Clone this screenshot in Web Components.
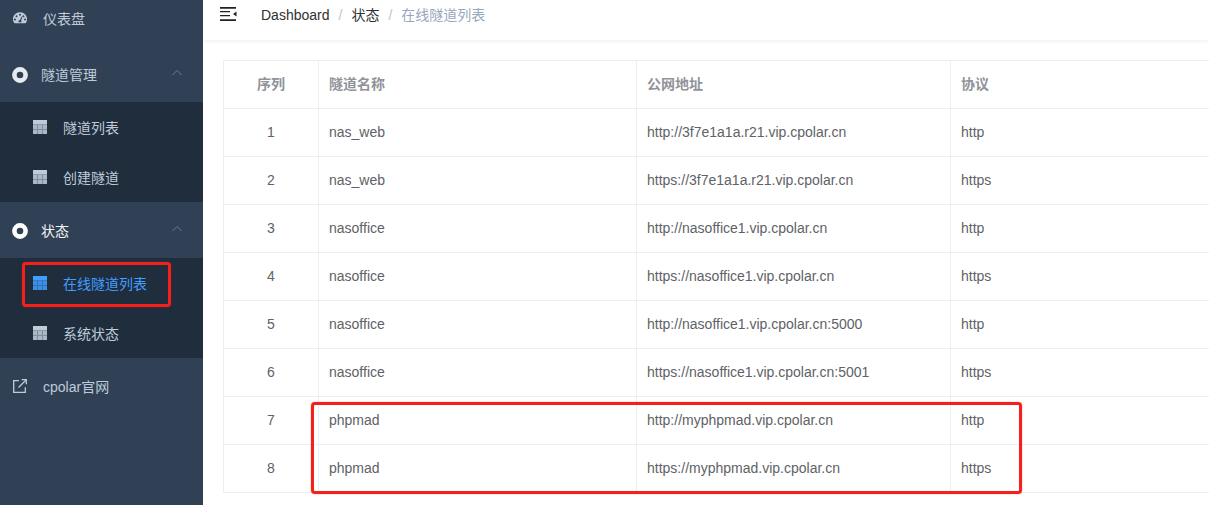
<!DOCTYPE html>
<html lang="zh">
<head>
<meta charset="utf-8">
<title>在线隧道列表</title>
<style>
  html, body { margin: 0; height: 100%; overflow: hidden; background: #fff; }
  body { font-family: "Liberation Sans", "Noto Sans CJK SC", sans-serif; font-size: 14px; }
  #app { display: flex; height: 505px; position: relative; }
</style>
</head>
<body>
<div id="app">
  <side-bar>
    <menu-item icon="gauge" indent="43">仪表盘</menu-item>
    <menu-item icon="ring" indent="41" arrow>隧道管理</menu-item>
    <sub-item>隧道列表</sub-item>
    <sub-item>创建隧道</sub-item>
    <menu-item icon="ring" indent="41" arrow current>状态</menu-item>
    <sub-item active>在线隧道列表</sub-item>
    <sub-item>系统状态</sub-item>
    <menu-item icon="link" indent="43">cpolar官网</menu-item>
  </side-bar>
  <main-panel>
    <top-bar></top-bar>
    <tunnel-table></tunnel-table>
  </main-panel>
  <mark-box style="left:22px;top:262px;width:149px;height:45px"></mark-box>
  <mark-box style="left:311px;top:402px;width:711px;height:92px"></mark-box>
</div>

<script>
const ICONS = {
  gauge: `<svg width="16" height="14" viewBox="0 0 16 14"><path fill="currentColor" fill-rule="evenodd" d="M8 1.2C3.9 1.2 1 4.3 1 8.2c0 1.4.4 2.6 1 3.6.2.3.5.4.8.4h10.4c.3 0 .6-.1.8-.4.6-1 1-2.2 1-3.6 0-3.9-2.900-7-7-7zM8 2.700a1 1 0 1 1 0 2 1 1 0 0 1 0-2zM4.500 4.300a1 1 0 1 1 0 2 1 1 0 0 1 0-2zM11.500 4.300a1 1 0 1 1 0 2 1 1 0 0 1 0-2zM3 7.500a1 1 0 1 1 0 2 1 1 0 0 1 0-2zM13 7.500a1 1 0 1 1 0 2 1 1 0 0 1 0-2zM9.600 5.600l.8.400-1.300 3.500c.3.300.4.600.4 1 0 .3-.1.600-.2.800H6.700a1.600 1.600 0 0 1 1.300-2.400z"/></svg>`,
  ring: `<svg class="ring" width="16" height="16" viewBox="0 0 16 16"><circle cx="8" cy="8" r="5.600" fill="none" stroke="currentColor" stroke-width="4.600"/></svg>`,
  link: `<svg width="16" height="16" viewBox="0 0 16 16" fill="none" stroke="currentColor" stroke-width="1.300"><path d="M7 2.700H1.700v11.600h11.600V9.300"/><path d="M6.500 9.500L14 2"/><path d="M9.700 1.700h4.600v4.600"/></svg>`,
  grid: `<svg width="14" height="14" viewBox="0 0 14 14"><path fill="currentColor" d="M0 0h14v14H0z"/><path fill="#1f2d3d" opacity=".3" d="M0 4h14v1H0zM0 9h14v1H0zM4 5h1v9H4zM9 5h1v9H9z"/><path fill="#1f2d3d" opacity=".12" d="M0 5h14v9H0z"/></svg>`
};

class SideBar extends HTMLElement {
  constructor() {
    super();
    this.attachShadow({ mode: "open" });
    this.shadowRoot.innerHTML = `
      <style>
        :host { display: block; width: 203px; flex: none; height: 505px; background: #304156; overflow: hidden; }
        .scroll { margin-top: -10px; }
      </style>
      <div class="scroll"><slot></slot></div>`;
  }
}

class MenuItem extends HTMLElement {
  constructor() {
    super();
    this.attachShadow({ mode: "open" });
  }
  connectedCallback() {
    const icon = ICONS[this.getAttribute("icon")];
    const indent = this.getAttribute("indent") || 43;
    const arrow = this.hasAttribute("arrow")
      ? `<svg class="arrow" width="12" height="7" viewBox="0 0 12 7"><path fill="none" stroke="#6f7d8e" stroke-width="1" d="M1.500 6L6 1.500 10.500 6"/></svg>`
      : "";
    this.shadowRoot.innerHTML = `
      <style>
        :host { display: flex; align-items: center; height: 56px; color: #bfcbd9; font-size: 14px; position: relative; }
        :host([current]) { color: #f4f4f5; }
        .icon { display: flex; justify-content: center; width: 16px; margin-left: 12px; flex: none; }
        .ring { color: #e6ebf1; position: relative; top: 1px; }
        :host([current]) .ring { color: #fff; }
        .text { margin-left: ${indent - 28}px; }
        .arrow { margin-left: auto; margin-right: 20px; position: relative; top: -2px; }
      </style>
      <span class="icon">${icon}</span>
      <span class="text"><slot></slot></span>
      ${arrow}`;
  }
}

class SubItem extends HTMLElement {
  constructor() {
    super();
    this.attachShadow({ mode: "open" });
    this.shadowRoot.innerHTML = `
      <style>
        :host { display: flex; align-items: center; height: 50px; background: #1f2d3d; color: #bfcbd9; font-size: 14px; }
        :host([active]) { color: #409eff; }
        .icon { display: flex; margin-left: 33px; }
        .text { margin-left: 16px; }
      </style>
      <span class="icon">${ICONS.grid}</span>
      <span class="text"><slot></slot></span>`;
  }
}

class MainPanel extends HTMLElement {
  constructor() {
    super();
    this.attachShadow({ mode: "open" });
    this.shadowRoot.innerHTML = `
      <style>
        :host { display: block; flex: 1; min-width: 0; height: 505px; overflow: hidden; }
      </style>
      <slot></slot>`;
  }
}

class TopBar extends HTMLElement {
  constructor() {
    super();
    this.attachShadow({ mode: "open" });
    this.shadowRoot.innerHTML = `
      <style>
        :host { display: flex; align-items: center; height: 50px; margin-top: -10px; background: #fff; box-shadow: 0 1px 4px rgba(0,21,41,.08); font-size: 14px; }
        svg { margin-left: 17px; flex: none; position: relative; top: -1px; }
        .crumbs { margin: 0 0 2px 24px; color: #303133; }
        .sep { color: #c0c4cc; margin: 0 9px; }
        .last { color: #97a8be; }
      </style>
      <svg width="17" height="14" viewBox="0 0 17 14"><path fill="#222" d="M0 0h16v1.700H0zM0 4h10v1.300H0zM0 8h10v1.300H0zM0 12.300h16V14H0zM16.500 4.500v5L13 7z"/></svg>
      <div class="crumbs"><span>Dashboard</span><span class="sep">/</span><span>状态</span><span class="sep">/</span><span class="last">在线隧道列表</span></div>`;
  }
}

const ROWS = [
  ["1", "nas_web", "http://3f7e1a1a.r21.vip.cpolar.cn", "http"],
  ["2", "nas_web", "https://3f7e1a1a.r21.vip.cpolar.cn", "https"],
  ["3", "nasoffice", "http://nasoffice1.vip.cpolar.cn", "http"],
  ["4", "nasoffice", "https://nasoffice1.vip.cpolar.cn", "https"],
  ["5", "nasoffice", "http://nasoffice1.vip.cpolar.cn:5000", "http"],
  ["6", "nasoffice", "https://nasoffice1.vip.cpolar.cn:5001", "https"],
  ["7", "phpmad", "http://myphpmad.vip.cpolar.cn", "http"],
  ["8", "phpmad", "https://myphpmad.vip.cpolar.cn", "https"],
];

class TunnelTable extends HTMLElement {
  constructor() {
    super();
    this.attachShadow({ mode: "open" });
    const row = (cells, cls) =>
      `<div class="row ${cls}">${cells.map((c) => `<div class="cell">${c}</div>`).join("")}</div>`;
    this.shadowRoot.innerHTML = `
      <style>
        :host { display: block; margin: 20px 0 0 20px; border-left: 1px solid #ebeef5; border-top: 1px solid #ebeef5; font-size: 14px; color: #606266; }
        .row { display: grid; grid-template-columns: 95px 318px 314px 1fr; height: 48px; box-sizing: border-box; border-bottom: 1px solid #ebeef5; }
        .cell { display: flex; align-items: center; padding: 0 0 2px 10px; border-right: 1px solid #ebeef5; }
        .cell:first-child { justify-content: center; padding-left: 0; }
        .cell:last-child { border-right: 0; }
        .head { color: #909399; font-weight: 700; }
        .head .cell { padding-bottom: 4px; }
      </style>
      ${row(["序列", "隧道名称", "公网地址", "协议"], "head")}
      ${ROWS.map((r) => row(r, "")).join("")}`;
  }
}

class MarkBox extends HTMLElement {
  constructor() {
    super();
    this.attachShadow({ mode: "open" });
    this.shadowRoot.innerHTML = `
      <style>
        :host { display: block; position: absolute; box-sizing: border-box; border: 3px solid #f5201a; border-radius: 4px; box-shadow: 0 0 1px #f5201a; pointer-events: none; }
      </style>`;
  }
}

customElements.define("side-bar", SideBar);
customElements.define("menu-item", MenuItem);
customElements.define("sub-item", SubItem);
customElements.define("main-panel", MainPanel);
customElements.define("top-bar", TopBar);
customElements.define("tunnel-table", TunnelTable);
customElements.define("mark-box", MarkBox);
</script>
</body>
</html>
